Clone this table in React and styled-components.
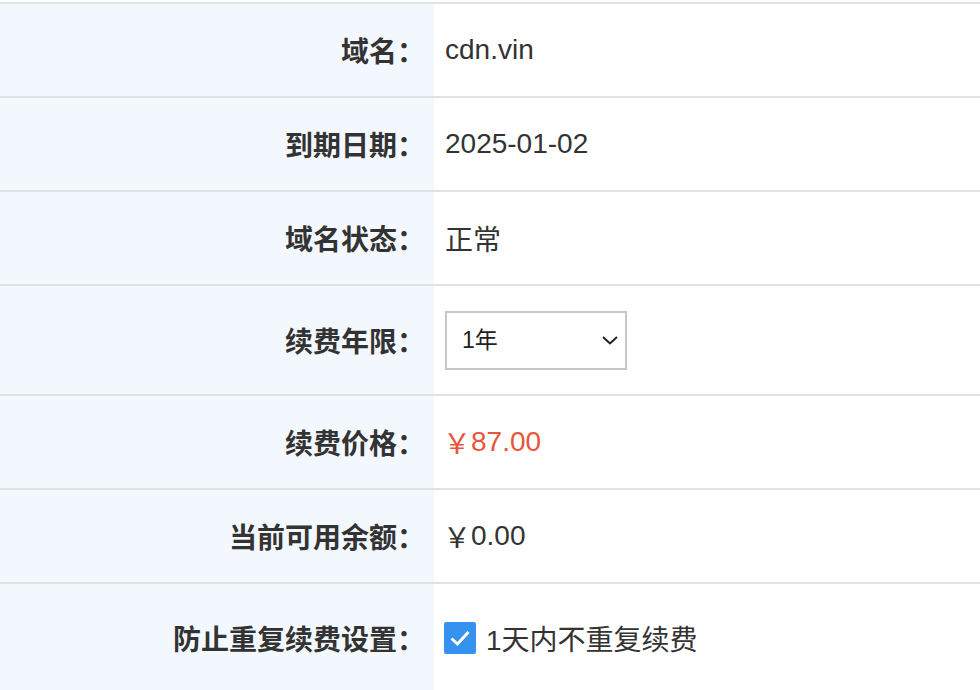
import React from "react";
import styled, { createGlobalStyle } from "styled-components";

const Global = createGlobalStyle`
  html, body { margin: 0; padding: 0; background: #fff; }
  body {
    font-family: "Liberation Sans", "Noto Sans CJK SC", sans-serif;
    color: #333;
  }
`;

const Table = styled.div`
  margin-top: 2px;
  border-top: 2px solid #e2e2e2;
  display: grid;
  grid-template-columns: 434px 1fr;
`;

const Row = styled.div`
  display: contents;
`;

const Label = styled.div`
  background: #f3f8fe;
  height: ${(p) => (p.$tall ? 108 : 92)}px;
  border-bottom: 2px solid #e2e2e2;
  display: flex;
  align-items: center;
  justify-content: flex-end;
  padding-right: 9px;
  font-size: 28px;
  font-weight: 700;
  color: #333;
`;

const Value = styled.div`
  height: ${(p) => (p.$tall ? 108 : 92)}px;
  border-bottom: 2px solid #e2e2e2;
  display: flex;
  align-items: center;
  padding-left: 11px;
  font-size: 28px;
  color: ${(p) => (p.$price ? "#e8553a" : "#333")};
`;

const SelectWrap = styled.div`
  position: relative;
  width: 182px;
  height: 59px;
`;

const Select = styled.select`
  appearance: none;
  -webkit-appearance: none;
  width: 100%;
  height: 100%;
  box-sizing: border-box;
  border: 2px solid #c6c6c6;
  border-radius: 0;
  background: #fff;
  padding: 0 0 0 15px;
  font-family: "Liberation Sans", "Noto Sans CJK SC", sans-serif;
  font-size: 23px;
  color: #222;
  outline: none;
`;

const Chevron = styled.svg`
  position: absolute;
  right: 8px;
  top: 50%;
  transform: translateY(-50%);
  pointer-events: none;
`;

const CheckLabel = styled.label`
  display: flex;
  align-items: center;
  gap: 10px;
  font-size: 28px;
  color: #333;
`;

const Box = styled.span`
  width: 32px;
  height: 32px;
  background: #3592ee;
  border-radius: 2px;
  display: flex;
  align-items: center;
  justify-content: center;
  margin-left: -1px;
`;

const Yen = styled.span`
  margin-left: -2px;
`;

export default function App() {
  return (
    <>
      <Global />
      <Table>
        <Row>
          <Label>域名：</Label>
          <Value>cdn.vin</Value>
        </Row>
        <Row>
          <Label>到期日期：</Label>
          <Value>2025-01-02</Value>
        </Row>
        <Row>
          <Label>域名状态：</Label>
          <Value>正常</Value>
        </Row>
        <Row>
          <Label $tall>续费年限：</Label>
          <Value $tall>
            <SelectWrap>
              <Select defaultValue="1">
                <option value="1">1年</option>
                <option value="2">2年</option>
                <option value="3">3年</option>
              </Select>
              <Chevron width="18" height="12" viewBox="0 0 18 12">
                <path d="M2 3 L9 9.5 L16 3" fill="none" stroke="#222" strokeWidth="2" />
              </Chevron>
            </SelectWrap>
          </Value>
        </Row>
        <Row>
          <Label>续费价格：</Label>
          <Value $price>
            <Yen>￥</Yen>87.00
          </Value>
        </Row>
        <Row>
          <Label>当前可用余额：</Label>
          <Value>
            <Yen>￥</Yen>0.00
          </Value>
        </Row>
        <Row>
          <Label $tall>防止重复续费设置：</Label>
          <Value $tall>
            <CheckLabel>
              <Box>
                <svg width="22" height="18" viewBox="0 0 22 18">
                  <path d="M2.5 9.5 L8.5 15 L19.5 3" fill="none" stroke="#fff" strokeWidth="3" />
                </svg>
              </Box>
              1天内不重复续费
            </CheckLabel>
          </Value>
        </Row>
      </Table>
    </>
  );
}
